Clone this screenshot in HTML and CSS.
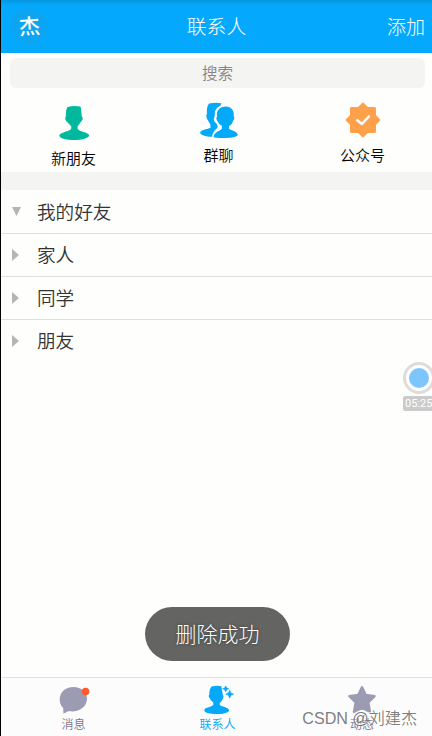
FILE: index.html
```html
<!DOCTYPE html>
<html lang="zh-CN">
<head>
<meta charset="utf-8">
<title>联系人</title>
<link rel="stylesheet" href="styles.css">
</head>
<body>
<div class="app">
  <header class="header">
    <div class="avatar"><span>杰</span></div>
    <h1 class="title">联系人</h1>
    <span class="add">添加</span>
  </header>
  <div class="search">搜索</div>
  <nav class="shortcuts">
    <div class="shortcut friend">
      <svg width="32" height="36" viewBox="0 0 32 36"><path fill="#00b89c" d="M9.5 2Q16 .1 22.3 1.5L23 3.5 23.8 11.5Q25.6 13 24 15.5L19.6 21.2V23.5C20.3 25.5 23 26.1 26.5 27.2Q31.2 28.8 31.2 30.8C30 33.5 23 35.1 16.2 35.1S2 33.8 1.3 30.8Q1.2 28.8 5.5 27.4C9 26.1 12.5 25.6 13.2 23.5V21.2L8.2 16Q6.4 13 7.9 11.5Q7.6 5 9.5 2Z"/></svg>
      <span>新朋友</span>
    </div>
    <div class="shortcut group">
      <svg width="40" height="37" viewBox="0 0 40 37"><g fill="#04a9f9"><path d="M10 1.5Q17 .2 22.4 1.2L21.4 3.7C17.5 5.5 15.5 8.5 15.9 12.6L14.8 17.5Q15.3 20.7 17.7 21.7L18.7 24.8C18.2 27.3 13.8 28.5 13.1 34.8C6.3 34.8 1.3 32.8 1.1 30.7C1.6 27.8 7.8 27.5 11.5 25.7V22.7L8.4 17.5Q6.3 13.7 8 12.1Q7.2 5 10 1.5Z"/><path d="M26.8 4.4C31.8 4.3 35.5 8 34.8 14.5Q36.2 15.6 34.2 18.7Q33.6 21.8 30 24.2V26.5C31 28.4 37.8 28.8 38.9 32.7Q38.5 35.7 26 36Q17 36.2 14.6 34.9C15 29.7 21.2 29 22.9 26.4V23.8Q19.1 21.5 18.7 19.4Q16.4 16.7 18 14.8C17 8.2 21 4.5 26.8 4.4Z"/></g></svg>
      <span>群聊</span>
    </div>
    <div class="shortcut official">
      <svg width="36" height="36" viewBox="0 0 36 36"><path fill="#ffa14a" stroke="#ffa14a" stroke-width="3" stroke-linejoin="round" d="M18 2.2 22.3 6.5H29.5V13.7L33.8 18 29.5 22.3V29.5H22.3L18 33.8 13.7 29.5H6.5V22.3L2.2 18 6.5 13.7V6.5H13.7Z"/><path fill="none" stroke="#fff" stroke-width="2.5" stroke-linecap="round" stroke-linejoin="round" d="m12.3 18.3 4.6 3.7 7-7.7"/></svg>
      <span>公众号</span>
    </div>
  </nav>
  <main class="groups">
    <div class="row open"><i class="arrow"></i><span>我的好友</span></div>
    <div class="row"><i class="arrow"></i><span>家人</span></div>
    <div class="row"><i class="arrow"></i><span>同学</span></div>
    <div class="row"><i class="arrow"></i><span>朋友</span></div>
  </main>
  <footer class="tabs">
    <div class="tab">
      <svg width="32" height="30" viewBox="0 0 32 30"><path fill="#9b9bb3" d="M15.5 2C23.2 2 29 7 29 13.8S23 26.3 15 26.4C11.5 26.5 10.5 26 8.8 27L5.5 28.7Q5.2 25.7 5.3 23.2Q1.7 19.5 1.7 14.4C1.7 7.3 7.5 2 15.5 2Z"/><circle cx="27.6" cy="6.6" r="3.8" fill="#ff5b2c"/></svg>
      <span>消息</span>
    </div>
    <div class="tab active">
      <svg width="32" height="30" viewBox="0 0 32 30"><g fill="#04a9f9" transform="translate(1 0)"><path d="M8.6 1.5Q14 .4 18.3 1.2L19.8 9.8Q21.3 11 19.9 13.5Q19.4 15.6 16.7 18.1V19.8C17.7 22 25.8 22 26.1 25.4C25.2 28 19 29 13.3 29S1.6 28 1.2 25.2C1.7 21.9 9.5 22 10.3 19.7V17.5Q7.2 15 6.7 13.2Q4.9 10.9 6.3 9.8Q6.2 4 8.6 1.5Z"/><path d="m22.7.9 1 2 2.1.9-2.1.9-1 2.1-1-2.1-2.1-.9 2.1-.9ZM26.7 5.2l1.1 2.8 2.8 1.1-2.8 1.2-1.1 2.9-1.2-2.9-2.8-1.2 2.8-1.1Z" stroke="#04a9f9" stroke-width=".6"/></g></svg>
      <span>联系人</span>
    </div>
    <div class="tab moments">
      <svg width="30" height="30" viewBox="0 0 30 30"><path fill="#9b9bb3" stroke="#9b9bb3" stroke-width="2.4" stroke-linejoin="round" d="m15 2.3 3.7 7.6 8.9 1.3-6.3 6.2 1.7 9.6-8-4.4-8 4.4 1.7-9.6-6.3-6.2 8.9-1.3Z"/></svg>
      <span>动态</span>
    </div>
  </footer>
  <div class="toast">删除成功</div>
  <div class="recorder"><div class="ring"><i></i></div><span>05:25</span></div>
  <div class="watermark">CSDN @刘建杰</div>
</div>
</body>
</html>
```
FILE: styles.css
```css
* { box-sizing: border-box; }

body {
  margin: 0;
  background: #fefefc;
  font-family: "Noto Sans CJK SC", sans-serif;
  font-weight: 350;
  color: #333;
}

svg { display: block; }

.app {
  position: relative;
  display: flex;
  flex-direction: column;
  width: 432px;
  height: 736px;
  border-left: 1px solid #000;
  overflow: hidden;
}

.header {
  display: grid;
  grid-template-columns: 100px 1fr 100px;
  align-items: center;
  height: 53px;
  padding: 0 7px 1px 10px;
  background: linear-gradient(#0595dc, #04a9fb 5px, #04a9fd 10px);
  color: #fff;
}

.avatar {
  display: flex;
  align-items: center;
  justify-content: center;
  width: 36px;
  height: 36px;
  border-radius: 50%;
  background: #0da5f1;
  font-size: 21px;
  font-weight: 500;
  line-height: 1;
}

.avatar span {
  margin-top: -2px;
  transform: rotate(-4deg);
}

.title {
  margin: 0;
  padding-right: 3px;
  font-size: 19.8px;
  font-weight: 300;
  line-height: 28px;
  text-align: center;
}

.add {
  font-size: 19px;
  font-weight: 300;
  line-height: 28px;
  text-align: right;
}

.search {
  height: 30px;
  margin: 5px 7px 0 9px;
  border-radius: 6px;
  background: #f4f4f3;
  color: #858585;
  font-size: 15.5px;
  line-height: 29px;
  text-align: center;
}

.shortcuts {
  display: grid;
  grid-template-columns: 145px 145px 143px;
  height: 84px;
}

.shortcut {
  display: flex;
  flex-direction: column;
  align-items: center;
  padding-top: 14px;
  color: #000;
  font-size: 15px;
  line-height: 22px;
}

.shortcut span { margin-top: 5px; }
.friend { padding-top: 17px; }
.friend span,
.official span { margin-top: 6px; }

.groups {
  flex: 1;
  border-top: 18px solid #f4f4f3;
}

.row {
  display: flex;
  align-items: center;
  height: 43px;
  padding-left: 11px;
  font-size: 18.6px;
  line-height: 28px;
}

.row span { margin-top: -2px; }

.row + .row {
  border-top: 1px solid #dfdfdf;
}

.arrow {
  width: 7px;
  height: 12px;
  margin-right: 18px;
  background: #b5b5b5;
  clip-path: polygon(0 0, 100% 50%, 0 100%);
}

.open .arrow {
  width: 9px;
  height: 9px;
  margin-right: 16px;
  clip-path: polygon(0 0, 100% 0, 50% 100%);
}

.tabs {
  display: grid;
  grid-template-columns: 145px 143px 146px;
  height: 59px;
  border-top: 1px solid #e1e1e1;
  background: #fcfcfc;
}

.tab {
  display: flex;
  flex-direction: column;
  align-items: center;
  padding-top: 7px;
  color: #77778f;
  font-size: 12px;
  line-height: 18px;
}

.active { color: #04a9f9; }

.toast {
  position: absolute;
  left: 144px;
  top: 607px;
  width: 145px;
  height: 54px;
  border-radius: 27px;
  background: #646463;
  color: #fff;
  font-size: 21px;
  font-weight: 300;
  line-height: 53px;
  text-align: center;
  text-shadow: 0 0 3px #333;
}

.recorder {
  position: absolute;
  left: 402px;
  top: 362px;
  width: 32px;
}

.ring {
  display: flex;
  align-items: center;
  justify-content: center;
  width: 32px;
  height: 32px;
  border: 3px solid #dcdcdc;
  border-radius: 50%;
  background: #fff;
}

.ring i {
  width: 20px;
  height: 20px;
  border-radius: 50%;
  background: #7cc5fd;
}

.recorder span {
  display: block;
  width: 32px;
  height: 15px;
  margin-top: 2px;
  padding-left: 2px;
  border-radius: 2px;
  background: #cbcbcb;
  color: #fff;
  font: 400 11px/16px Roboto, sans-serif;
}

.watermark {
  position: absolute;
  right: 15px;
  top: 706px;
  color: rgba(110, 110, 110, .9);
  font-family: "Liberation Sans", "Noto Sans CJK SC", sans-serif;
  font-size: 16.1px;
  line-height: 24px;
  white-space: nowrap;
  text-shadow: -1px -1px 0 rgba(255, 255, 255, .7);
}
```
